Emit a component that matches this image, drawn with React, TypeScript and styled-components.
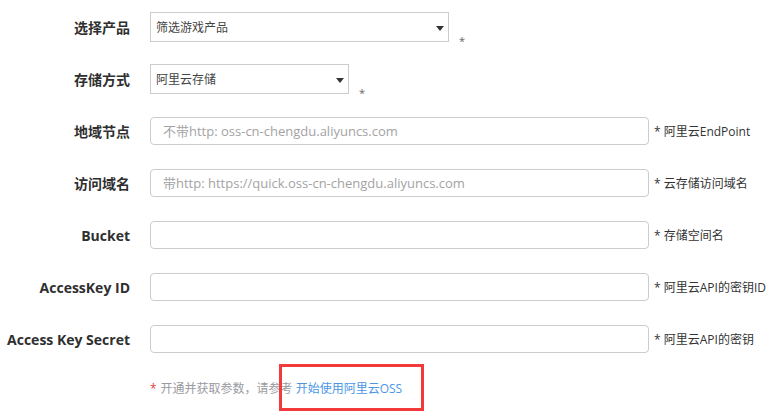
import styled, { createGlobalStyle } from 'styled-components';

const GlobalStyle = createGlobalStyle`
  body {
    margin: 0;
    background: #ffffff;
    font-family: "Open Sans", "Noto Sans CJK SC", sans-serif;
    color: #333333;
  }
`;

const Form = styled.div`
  width: 781px;
  padding-top: 1px;
`;

const Row = styled.div`
  display: grid;
  grid-template-columns: 130px 1fr;
  column-gap: 20px;
  align-items: center;
  height: 52px;
`;

const Label = styled.label`
  text-align: right;
  font-size: 14px;
  font-weight: 700;
  color: #2f2f2f;
  white-space: nowrap;
`;

const Field = styled.div`
  display: flex;
  align-items: center;
  gap: 5px;
`;

const Select = styled.div<{ $width: number }>`
  position: relative;
  box-sizing: border-box;
  width: ${(p) => p.$width}px;
  height: 30px;
  border: 1px solid #cccccc;
  padding: 0 5px 1px;
  display: flex;
  align-items: center;
  font-size: 12px;
  color: #444444;
`;

const Arrow = styled.span`
  position: absolute;
  right: 4px;
  top: 13px;
  width: 0;
  height: 0;
  border-left: 4px solid transparent;
  border-right: 4px solid transparent;
  border-top: 5px solid #333333;
`;

const Star = styled.span`
  align-self: flex-end;
  margin-left: 5px;
  margin-bottom: -6px;
  font-size: 11px;
  color: #666666;
`;

const Input = styled.input`
  box-sizing: border-box;
  width: 499px;
  height: 28px;
  border: 1px solid #cccccc;
  border-radius: 4px;
  padding: 0 12px;
  font-family: "Open Sans", "Noto Sans CJK SC", sans-serif;
  font-size: 13px;
  color: #333333;
  outline: none;

  &::placeholder {
    color: #a3a3a3;
  }
`;

const Hint = styled.span`
  font-size: 12px;
  color: #333333;
  white-space: nowrap;
`;

const Note = styled.div`
  height: 46px;
  display: flex;
  align-items: center;
  padding-left: 150px;
  font-size: 12px;
  color: #9a9aa2;
`;

const Required = styled.span`
  color: #e64242;
  margin-right: 4px;
`;

const Link = styled.a`
  position: relative;
  margin-left: 3px;
  color: #4b97e6;
  text-decoration: none;
`;

const Highlight = styled.span`
  position: absolute;
  top: -15px;
  bottom: -14px;
  left: -17px;
  right: -22px;
  border: 3px solid #f23a3a;
  pointer-events: none;
`;

const inputs = [
  { label: '地域节点', placeholder: '不带http: oss-cn-chengdu.aliyuncs.com', hint: '* 阿里云EndPoint' },
  { label: '访问域名', placeholder: '带http: https://quick.oss-cn-chengdu.aliyuncs.com', hint: '* 云存储访问域名' },
  { label: 'Bucket', placeholder: '', hint: '* 存储空间名' },
  { label: 'AccessKey ID', placeholder: '', hint: '* 阿里云API的密钥ID' },
  { label: 'Access Key Secret', placeholder: '', hint: '* 阿里云API的密钥' },
];

const App = () => {
  return (
    <>
      <GlobalStyle />
      <Form>
        <Row>
          <Label>选择产品</Label>
          <Field>
            <Select $width={299}>
              筛选游戏产品
              <Arrow />
            </Select>
            <Star>*</Star>
          </Field>
        </Row>
        <Row>
          <Label>存储方式</Label>
          <Field>
            <Select $width={199}>
              阿里云存储
              <Arrow />
            </Select>
            <Star>*</Star>
          </Field>
        </Row>
        {inputs.map((item) => (
          <Row key={item.label}>
            <Label>{item.label}</Label>
            <Field>
              <Input placeholder={item.placeholder} />
              <Hint>{item.hint}</Hint>
            </Field>
          </Row>
        ))}
        <Note>
          <Required>*</Required>
          开通并获取参数，请参考
          <Link href="#">
            开始使用阿里云OSS
            <Highlight />
          </Link>
        </Note>
      </Form>
    </>
  );
};

export default App;
